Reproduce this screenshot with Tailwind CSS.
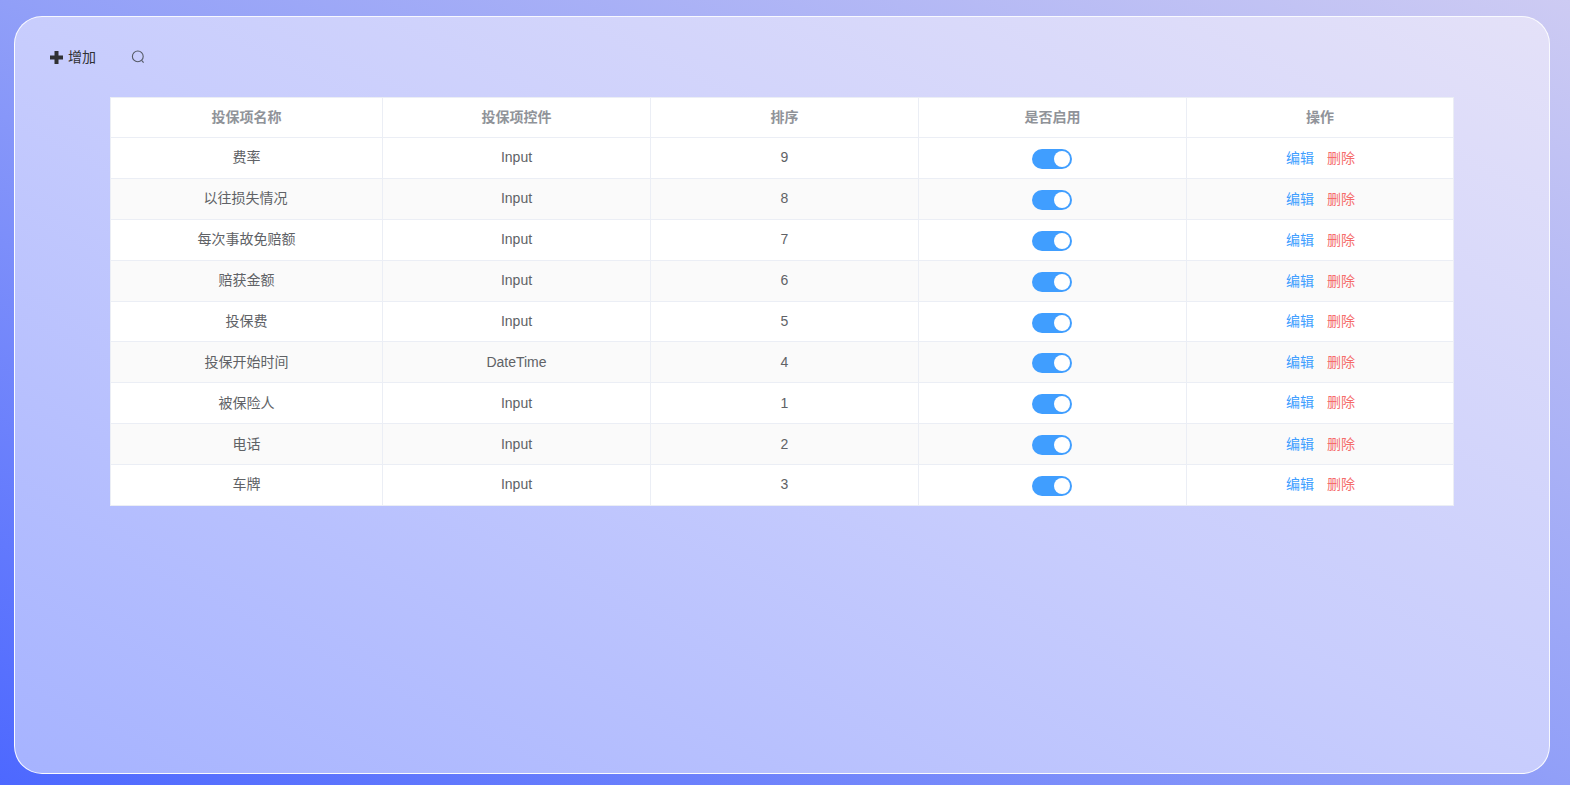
<!DOCTYPE html>
<html lang="en">
<head>
    <meta charset="UTF-8">
    <title>投保项管理</title>
    <script src="https://cdn.jsdelivr.net/npm/@tailwindcss/browser@4"></script>
</head>
<body class="m-0 font-['Liberation_Sans','Noto_Sans_CJK_SC',sans-serif]">
    <div class="h-[785px] w-[1570px] overflow-hidden pt-4 pl-[14px] bg-[linear-gradient(to_top_right,#4d68ff_0%,#919ff8_50%,#cdcbf3_100%)]">
        <main class="h-[758px] w-[1536px] rounded-[28px] border border-white/90 bg-[linear-gradient(to_top_right,#a6b3ff_0%,#c8cdfd_50%,#e4e1f8_100%)] pt-[31px]">
            <!-- toolbar -->
            <div class="flex h-5 items-center pl-[35px] text-sm text-[#303133]">
                <button class="-mt-0.5 flex items-center gap-[5px]">
                    <svg class="h-[13px] w-[13px]" viewBox="0 0 13 13"><path d="M4.5 0h4v4.5H13v4H8.500V13h-4V8.500H0v-4h4.500z" fill="#303133"/></svg>
                    <span>增加</span>
                </button>
                <button class="ml-[35px] -mt-0.5">
                    <svg class="block h-[14px] w-[14px]" viewBox="0 0 14 14" fill="none" stroke="#555a66" stroke-width="1.1"><circle cx="6.800" cy="6.400" r="5.400"/><path d="M10.600 10.400 12.600 12.600"/></svg>
                </button>
            </div>
            <!-- table -->
            <div class="mt-[29px] ml-[95px] w-[1344px] border border-[#ebeef5] bg-white text-center text-sm text-[#606266]">
                <div class="grid h-[40px] grid-cols-[272px_268px_268px_268px_1fr] border-b border-[#ebeef5] font-bold text-[#909399]">
                    <div class="flex items-center justify-center border-r border-[#ebeef5] pb-0.5">投保项名称</div>
                    <div class="flex items-center justify-center border-r border-[#ebeef5] pb-0.5">投保项控件</div>
                    <div class="flex items-center justify-center border-r border-[#ebeef5] pb-0.5">排序</div>
                    <div class="flex items-center justify-center border-r border-[#ebeef5] pb-0.5">是否启用</div>
                    <div class="flex items-center justify-center pb-0.5">操作</div>
                </div>
                <div class="grid h-[41px] grid-cols-[272px_268px_268px_268px_1fr] border-b border-[#ebeef5]">
                    <div class="flex items-center justify-center border-r border-[#ebeef5] pb-0.5">费率</div>
                    <div class="flex items-center justify-center border-r border-[#ebeef5] pb-0.5">Input</div>
                    <div class="flex items-center justify-center border-r border-[#ebeef5] pb-0.5">9</div>
                    <div class="flex items-center justify-center border-r border-[#ebeef5]"><span class="mt-0.5 mr-0.5 flex h-5 w-10 items-center justify-end rounded-full bg-[#409eff] pr-0.5"><span class="h-4 w-4 rounded-full bg-white"></span></span></div>
                    <div class="flex items-center justify-center gap-[13px] pl-px"><span class="text-[#409eff]">编辑</span><span class="text-[#f56c6c]">删除</span></div>
                </div>
                <div class="grid h-[41px] grid-cols-[272px_268px_268px_268px_1fr] border-b border-[#ebeef5] bg-[#fafafa]">
                    <div class="flex items-center justify-center border-r border-[#ebeef5] pb-0.5 pr-0.5">以往损失情况</div>
                    <div class="flex items-center justify-center border-r border-[#ebeef5] pb-0.5">Input</div>
                    <div class="flex items-center justify-center border-r border-[#ebeef5] pb-0.5">8</div>
                    <div class="flex items-center justify-center border-r border-[#ebeef5]"><span class="mt-0.5 mr-0.5 flex h-5 w-10 items-center justify-end rounded-full bg-[#409eff] pr-0.5"><span class="h-4 w-4 rounded-full bg-white"></span></span></div>
                    <div class="flex items-center justify-center gap-[13px] pl-px"><span class="text-[#409eff]">编辑</span><span class="text-[#f56c6c]">删除</span></div>
                </div>
                <div class="grid h-[41px] grid-cols-[272px_268px_268px_268px_1fr] border-b border-[#ebeef5]">
                    <div class="flex items-center justify-center border-r border-[#ebeef5] pb-0.5">每次事故免赔额</div>
                    <div class="flex items-center justify-center border-r border-[#ebeef5] pb-0.5">Input</div>
                    <div class="flex items-center justify-center border-r border-[#ebeef5] pb-0.5">7</div>
                    <div class="flex items-center justify-center border-r border-[#ebeef5]"><span class="mt-0.5 mr-0.5 flex h-5 w-10 items-center justify-end rounded-full bg-[#409eff] pr-0.5"><span class="h-4 w-4 rounded-full bg-white"></span></span></div>
                    <div class="flex items-center justify-center gap-[13px] pl-px"><span class="text-[#409eff]">编辑</span><span class="text-[#f56c6c]">删除</span></div>
                </div>
                <div class="grid h-[41px] grid-cols-[272px_268px_268px_268px_1fr] border-b border-[#ebeef5] bg-[#fafafa]">
                    <div class="flex items-center justify-center border-r border-[#ebeef5] pb-0.5">赔获金额</div>
                    <div class="flex items-center justify-center border-r border-[#ebeef5] pb-0.5">Input</div>
                    <div class="flex items-center justify-center border-r border-[#ebeef5] pb-0.5">6</div>
                    <div class="flex items-center justify-center border-r border-[#ebeef5]"><span class="mt-0.5 mr-0.5 flex h-5 w-10 items-center justify-end rounded-full bg-[#409eff] pr-0.5"><span class="h-4 w-4 rounded-full bg-white"></span></span></div>
                    <div class="flex items-center justify-center gap-[13px] pl-px"><span class="text-[#409eff]">编辑</span><span class="text-[#f56c6c]">删除</span></div>
                </div>
                <div class="grid h-[40px] grid-cols-[272px_268px_268px_268px_1fr] border-b border-[#ebeef5]">
                    <div class="flex items-center justify-center border-r border-[#ebeef5] pb-0.5">投保费</div>
                    <div class="flex items-center justify-center border-r border-[#ebeef5] pb-0.5">Input</div>
                    <div class="flex items-center justify-center border-r border-[#ebeef5] pb-0.5">5</div>
                    <div class="flex items-center justify-center border-r border-[#ebeef5]"><span class="mt-0.5 mr-0.5 flex h-5 w-10 items-center justify-end rounded-full bg-[#409eff] pr-0.5"><span class="h-4 w-4 rounded-full bg-white"></span></span></div>
                    <div class="flex items-center justify-center gap-[13px] pb-0.5 pl-px"><span class="text-[#409eff]">编辑</span><span class="text-[#f56c6c]">删除</span></div>
                </div>
                <div class="grid h-[41px] grid-cols-[272px_268px_268px_268px_1fr] border-b border-[#ebeef5] bg-[#fafafa]">
                    <div class="flex items-center justify-center border-r border-[#ebeef5]">投保开始时间</div>
                    <div class="flex items-center justify-center border-r border-[#ebeef5]">DateTime</div>
                    <div class="flex items-center justify-center border-r border-[#ebeef5]">4</div>
                    <div class="flex items-center justify-center border-r border-[#ebeef5]"><span class="mt-0.5 mr-0.5 flex h-5 w-10 items-center justify-end rounded-full bg-[#409eff] pr-0.5"><span class="h-4 w-4 rounded-full bg-white"></span></span></div>
                    <div class="flex items-center justify-center gap-[13px] pl-px"><span class="text-[#409eff]">编辑</span><span class="text-[#f56c6c]">删除</span></div>
                </div>
                <div class="grid h-[41px] grid-cols-[272px_268px_268px_268px_1fr] border-b border-[#ebeef5]">
                    <div class="flex items-center justify-center border-r border-[#ebeef5]">被保险人</div>
                    <div class="flex items-center justify-center border-r border-[#ebeef5]">Input</div>
                    <div class="flex items-center justify-center border-r border-[#ebeef5]">1</div>
                    <div class="flex items-center justify-center border-r border-[#ebeef5]"><span class="mt-0.5 mr-0.5 flex h-5 w-10 items-center justify-end rounded-full bg-[#409eff] pr-0.5"><span class="h-4 w-4 rounded-full bg-white"></span></span></div>
                    <div class="flex items-center justify-center gap-[13px] pb-0.5 pl-px"><span class="text-[#409eff]">编辑</span><span class="text-[#f56c6c]">删除</span></div>
                </div>
                <div class="grid h-[41px] grid-cols-[272px_268px_268px_268px_1fr] border-b border-[#ebeef5] bg-[#fafafa]">
                    <div class="flex items-center justify-center border-r border-[#ebeef5]">电话</div>
                    <div class="flex items-center justify-center border-r border-[#ebeef5]">Input</div>
                    <div class="flex items-center justify-center border-r border-[#ebeef5]">2</div>
                    <div class="flex items-center justify-center border-r border-[#ebeef5]"><span class="mt-0.5 mr-0.5 flex h-5 w-10 items-center justify-end rounded-full bg-[#409eff] pr-0.5"><span class="h-4 w-4 rounded-full bg-white"></span></span></div>
                    <div class="flex items-center justify-center gap-[13px] pl-px"><span class="text-[#409eff]">编辑</span><span class="text-[#f56c6c]">删除</span></div>
                </div>
                <div class="grid h-[40px] grid-cols-[272px_268px_268px_268px_1fr]">
                    <div class="flex items-center justify-center border-r border-[#ebeef5] pb-0.5">车牌</div>
                    <div class="flex items-center justify-center border-r border-[#ebeef5] pb-0.5">Input</div>
                    <div class="flex items-center justify-center border-r border-[#ebeef5] pb-0.5">3</div>
                    <div class="flex items-center justify-center border-r border-[#ebeef5]"><span class="mt-0.5 mr-0.5 flex h-5 w-10 items-center justify-end rounded-full bg-[#409eff] pr-0.5"><span class="h-4 w-4 rounded-full bg-white"></span></span></div>
                    <div class="flex items-center justify-center gap-[13px] pb-0.5 pl-px"><span class="text-[#409eff]">编辑</span><span class="text-[#f56c6c]">删除</span></div>
                </div>
            </div>
        </main>
    </div>
</body>
</html>
